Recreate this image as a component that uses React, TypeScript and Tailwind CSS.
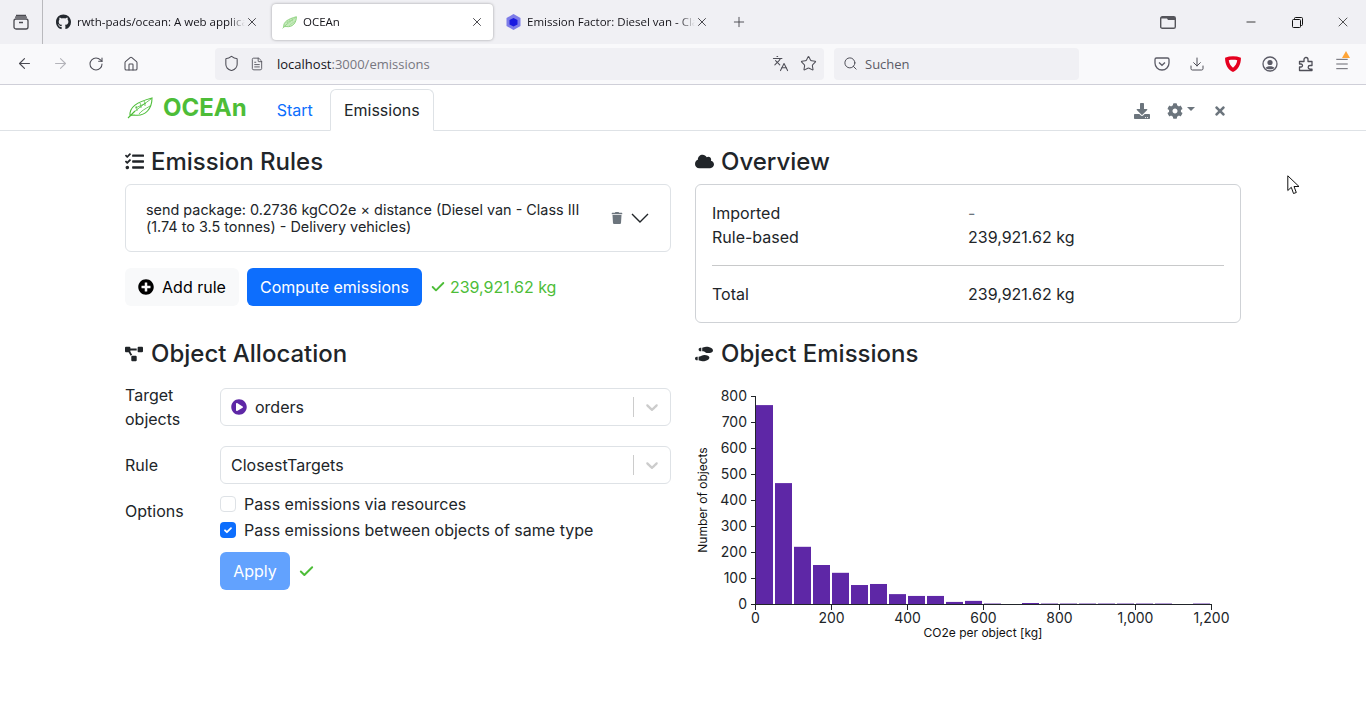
import React from "react";
import { FaCloud, FaCog, FaDownload, FaGithub, FaPlayCircle, FaPlusCircle, FaProjectDiagram, FaShoePrints, FaTasks, FaTimes, FaTrash } from "react-icons/fa";
import { ArrowLeft, ArrowRight, Check, Download, FileText, House, Languages, Menu, Minus, Plus, RotateCw, Search, Shield, Star, X } from "lucide-react";

const ui = "font-['Open_Sans','Noto_Sans',sans-serif]";

function Leaf({ size, width = 26, light = false }: { size: number; width?: number; light?: boolean }) {
  const c = light ? "#8bd07c" : "#4dbd38";
  return (
    <svg width={width} height={size} viewBox="0 0 26 22" fill="none">
      <path d="M1 21 C4 18 6 16 8 14 M3 19 C2 10 10 5 25 1 C25 11 19 20 7 18 C5 18 4 18 3 19Z" stroke={c} strokeWidth={light ? 1.6 : 1.1} fill={light ? "#c6eabd" : "none"} />
      <path d="M7 15 C12 11 17 7 24 2 M9 9 C10 11 10 13 10 14 M13 6 C14 8 14 10 14 11 M17 4 C18 6 18 7 18 9 M12 17 C14 14 18 12 23 9 M8 11 C11 10 15 8 19 6" stroke={c} strokeWidth="0.8" />
    </svg>
  );
}

function Cube() {
  return (
    <svg width="15" height="16" viewBox="0 0 15 16">
      <path d="M7.5 0 L14.5 4 V12 L7.5 16 L.5 12 V4Z" fill="#7d7ce8" />
      <path d="M7.5 4 L11.5 6 V10.5 L7.5 12.5 L3.5 10.5 V6Z" fill="#1a1ae0" />
    </svg>
  );
}

function Tab({ icon, title, active, cls }: { icon: React.ReactNode; title: string; active?: boolean; cls: string }) {
  return (
    <div className={`${cls} h-9 flex items-center rounded-[4px] ${active ? "bg-white shadow-[0_0_3px_rgba(0,0,0,0.35)]" : ""}`}>
      <span className="w-[15px] h-4 flex items-center justify-center shrink-0">{icon}</span>
      <span className="ml-[6px] flex-1 overflow-hidden whitespace-nowrap text-[11.5px] text-[#15141a] [mask-image:linear-gradient(to_left,transparent,black_16px)]">{title}</span>
      <X size={14} strokeWidth={1.3} className="text-[#15141a] shrink-0" />
    </div>
  );
}

function TabStrip() {
  return (
    <div className={`${ui} h-[44px] bg-[#f0f0f4] flex items-center`}>
      <div className="w-[43px] h-[44px] flex items-center justify-center border-r border-[#b9b9bd] shrink-0">
        <svg width="16" height="16" viewBox="0 0 16 16" fill="none" stroke="#4a4a50" strokeWidth="1.3">
          <rect x="1" y="5" width="14" height="10" rx="2" />
          <path d="M3 1.5h10M2 3.2h12M6 8.5h4" />
        </svg>
      </div>
      <div className="flex items-center ml-[8px] gap-[2px]">
        <Tab cls="w-[219px] pl-[5px] pr-[11px]" title="rwth-pads/ocean: A web application" icon={<FaGithub size={16} className="text-[#24292f]" />} />
        <Tab cls="w-[221px] pl-[10px] pr-[9px]" active title="OCEAn" icon={<Leaf size={13} width={15} light />} />
        <Tab cls="w-[221px] pl-[11px] pr-[7px] -mr-[3px]" title="Emission Factor: Diesel van - Class III" icon={<Cube />} />
      </div>
      <Plus size={16} strokeWidth={1.3} className="ml-[18px] text-[#3c3c42]" />
      <div className="flex-1" />
      <svg width="16" height="13" viewBox="0 0 16 13" fill="none" className="mr-[52px]">
        <rect x=".7" y=".7" width="14.6" height="11.6" rx="1.6" stroke="#55555b" strokeWidth="1.4" />
        <path d="M1 1h14v3H8L7 2.6H1Z" fill="#55555b" />
      </svg>
      <div className="w-[46px] flex justify-center"><Minus size={14} strokeWidth={1.3} className="text-black" /></div>
      <div className="w-[46px] flex justify-center">
        <svg width="11" height="11" viewBox="0 0 11 11" fill="none" stroke="#111" strokeWidth="1"><rect x=".5" y="2.5" width="8" height="8" rx="1" /><path d="M2.5 2.5V1.5a1 1 0 0 1 1-1h6a1 1 0 0 1 1 1v6a1 1 0 0 1-1 1H8.5" /></svg>
      </div>
      <div className="w-[46px] flex justify-center"><X size={16} strokeWidth={1} className="text-black" /></div>
    </div>
  );
}

function Toolbar() {
  const c = "text-[#4f4f58]";
  return (
    <div className={`${ui} h-[41px] bg-[#f9f9fb] border-b border-[#cfcfd8] flex items-center pb-px`}>
      <div className="w-[215px] shrink-0 flex items-center pl-[16px]">
        <ArrowLeft size={17} strokeWidth={1.6} className="text-[#4a4a52]" />
        <ArrowRight size={17} strokeWidth={1.5} className="ml-[19px] text-[#b4b4ba]" />
        <RotateCw size={16} strokeWidth={1.6} className={`ml-[19px] ${c}`} />
        <House size={16} strokeWidth={1.6} className={`ml-[19px] ${c}`} />
      </div>
      <div className="w-[609px] h-[32px] bg-[#f0f0f4] rounded-[4px] flex items-center pl-[8px] shrink-0">
        <Shield size={17} strokeWidth={1.5} className={c} />
        <FileText size={14} strokeWidth={1.5} className={`ml-[10px] ${c}`} />
        <span className="ml-[13px] mt-[3px] text-[13px] text-[#15141a]">localhost<span className="text-[#77777f]">:3000/emissions</span></span>
        <div className="flex-1" />
        <Languages size={17} strokeWidth={1.5} className={`${c} mr-[11px]`} />
        <Star size={17} strokeWidth={1.5} className={`${c} mr-[7px]`} />
      </div>
      <div className="w-[245px] h-[32px] bg-[#f0f0f4] rounded-[4px] flex items-center pl-[9px] ml-[10px] shrink-0">
        <Search size={15} strokeWidth={1.6} className={c} />
        <span className="ml-[7px] mt-[3px] text-[13px] text-[#5b5b66]">Suchen</span>
      </div>
      <div className="flex-1 flex items-center justify-end pr-[16px] gap-[20px]">
        <svg width="16" height="16" viewBox="0 0 16 16" fill="none" stroke="#5b5b66" strokeWidth="1.3" className="-mr-[1px]"><path d="M2.5 2h11A1.5 1.5 0 0 1 15 3.5V7A7 7 0 0 1 1 7V3.500A1.500 1.500 0 0 1 2.500 2Z" /><path d="M5 6.500l3 2.800 3-2.800" /></svg>
        <Download size={16} strokeWidth={1.5} className={`${c} -mr-[1px]`} />
        <svg width="18" height="18" viewBox="0 0 17 17" fill="none"><path d="M1 2.500 C6 .8 11 .8 16 2.500 C16 9 13.500 13.500 8.500 16 C3.500 13.500 1 9 1 2.500Z M4.500 5 C7 4.400 10 4.400 12.500 5 C12 8.500 10.500 10.500 8.500 12 C6.500 10.500 5 8.500 4.500 5Z" fill="#e5001f" fillRule="evenodd" /></svg>
        <svg width="16" height="16" viewBox="0 0 16 16" fill="none"><circle cx="8" cy="8" r="7" stroke="#5b5b66" strokeWidth="1.3" /><circle cx="8" cy="6.500" r="2.600" fill="#5b5b66" /><path d="M3.500 12 C5 9.800 11 9.800 12.500 12 C11 13.800 5 13.800 3.500 12Z" fill="#5b5b66" /></svg>
        <svg width="16" height="16" viewBox="0 0 16 16" fill="none" stroke="#4f4f58" strokeWidth="1.3" strokeLinejoin="round"><path d="M1.500 5.500H6V3.500a2 2 0 0 1 4 0v2h4v4h-2a1.800 1.800 0 0 0 0 3.600h2v1.400H1.500v-3.500h1.500a1.500 1.500 0 0 0 0-3H1.500Z" /></svg>
        <div className="relative w-[16px] h-[16px]">
          <Menu size={16} strokeWidth={1.3} className={c} />
          <span className="absolute -top-[5px] left-[8px] w-0 h-0 border-l-[4px] border-r-[4px] border-b-[7px] border-l-transparent border-r-transparent border-b-[#ffa436]" />
        </div>
      </div>
    </div>
  );
}

function Nav() {
  return (
    <div className="h-[46px] border-b border-[#dee2e6] flex justify-center">
      <div className="w-[1116px] flex items-end relative">
        <div className="h-[45px] flex items-center pl-[2px]">
          <Leaf size={22} />
          <span className="ml-[10px] font-bold text-[24px] text-[#4dbd38] leading-[29px]">OCEAn</span>
        </div>
        <span className="ml-[30px] h-[40px] flex items-center text-[16px] text-[#0d6efd]">Start</span>
        <div className="ml-[17px] h-[42px] w-[104px] -mb-px flex items-center justify-center bg-white border border-[#dee2e6] border-b-white rounded-t-[6px] text-[16px] text-[#212529]">Emissions</div>
        <div className="flex-1" />
        <div className="h-[42px] pt-[4px] flex items-center text-[#6c757d] pr-[14px]">
          <FaDownload size={16} />
          <FaCog size={16} className="ml-[17px]" />
          <span className="ml-[4px] -mt-[5px] w-0 h-0 border-l-[4px] border-r-[4px] border-t-[4px] border-l-transparent border-r-transparent border-t-[#6c757d]" />
          <FaTimes size={14} className="ml-[18px]" />
        </div>
      </div>
    </div>
  );
}

function Heading({ icon, title }: { icon: React.ReactNode; title: string }) {
  return (
    <h4 className="flex items-center h-[29px] text-[24px] leading-[29px] font-medium text-[#212529]">
      <span className="w-[26px] flex items-center">{icon}</span>
      {title}
    </h4>
  );
}

function Select({ children }: { children: React.ReactNode }) {
  return (
    <div className="flex-1 h-[38px] border border-[#dee2e6] rounded-[6px] flex items-center pl-[10px] pr-[8px] text-[#212529]">
      <div className="flex-1 flex items-center gap-[8px]">{children}</div>
      <span className="w-px h-[20px] bg-[#cccccc]" />
      <svg width="20" height="20" viewBox="0 0 20 20" className="ml-[8px] fill-[#cccccc]">
        <path d="M4.516 7.548c.436-.446 1.043-.481 1.576 0L10 11.295l3.908-3.747c.533-.481 1.141-.446 1.574 0 .436.445.408 1.197 0 1.615-.406.418-4.695 4.502-4.695 4.502a1.095 1.095 0 0 1-1.576 0S4.924 9.581 4.516 9.163c-.409-.418-.436-1.170 0-1.615z" />
      </svg>
    </div>
  );
}

const bars = [765, 465, 220, 150, 120, 73, 77, 38, 31, 31, 8, 12, 1, 0, 2, 1, 1, 1, 1, 1, 1, 1, 0, 1];

function Chart() {
  const x0 = 61, y0 = 214;
  const tick = "fill-[#212529]";
  return (
    <svg width="546" height="270" viewBox="0 0 546 270" className="block mt-[22px]">
      {bars.map((b, i) =>
        b > 0 ? <rect key={i} x={x0 + i * 19} y={y0 - Math.max(b * 0.26, 1)} width="17" height={Math.max(b * 0.26, 1)} fill="#5e27a6" opacity={b === 1 ? 0.45 : 1} /> : null
      )}
      <path d={`M${x0 - 0.5} 6V${y0 + 0.5}H${x0 + 456}`} fill="none" stroke="#212529" />
      {[0, 100, 200, 300, 400, 500, 600, 700, 800].map((v) => {
        const y = y0 - v * 0.26;
        return (
          <g key={v}>
            <path d={`M${x0 - 5} ${y + 0.5}H${x0}`} stroke="#212529" />
            <text x={x0 - 9} y={y + 5} textAnchor="end" fontSize="14" className={tick}>{v}</text>
          </g>
        );
      })}
      {[0, 200, 400, 600, 800, 1000, 1200].map((v) => {
        const x = x0 + v * 0.38;
        return (
          <g key={v}>
            <path d={`M${x - 0.5} ${y0}V${y0 + 6}`} stroke="#212529" />
            <text x={x - 0.5} y={y0 + 19} textAnchor="middle" fontSize="14" className={tick}>{v.toLocaleString("en-US")}</text>
          </g>
        );
      })}
      <text x="288" y={y0 + 33} textAnchor="middle" fontSize="12" className="fill-[#111]">CO2e per object [kg]</text>
      <text transform="translate(12 110) rotate(-90)" textAnchor="middle" fontSize="12" className="fill-[#111]">Number of objects</text>
    </svg>
  );
}

function Checkbox({ on, label }: { on?: boolean; label: string }) {
  return (
    <div className="h-[24px] flex items-center gap-[8px]">
      <span className={`w-4 h-4 rounded-[4px] flex items-center justify-center ${on ? "bg-[#0d6efd]" : "border border-[#dee2e6] bg-white"}`}>
        {on && (
          <svg width="12" height="12" viewBox="0 0 20 20" fill="none"><path d="m5 10.500 3.200 3.200L15 7" stroke="#fff" strokeWidth="3" strokeLinecap="round" strokeLinejoin="round" /></svg>
        )}
      </span>
      {label}
    </div>
  );
}

function Main() {
  return (
    <div className="w-[1116px] mx-auto grid grid-cols-2 gap-x-[24px] gap-y-[16px] pt-[16px] text-[16px] text-[#212529]">
      <section>
        <Heading title="Emission Rules" icon={<FaTasks size={19} />} />
        <div className="mt-[8px] h-[68px] border border-[#dee2e6] rounded-[6px] flex items-center pl-[20px] pr-[21px]">
          <p className="w-[450px] text-[14.4px] leading-[17px]">send package: 0.2736 kgCO2e × distance (Diesel van - Class III (1.74 to 3.5 tonnes) - Delivery vehicles)</p>
          <div className="flex-1" />
          <FaTrash size={12} className="text-[#6c757d]" />
          <svg width="18" height="10" viewBox="0 0 18 10" fill="none" className="ml-[8px]"><path d="M1 1l8 8 8-8" stroke="#212529" strokeWidth="1.4" /></svg>
        </div>
        <div className="mt-[16px] flex items-center">
          <div className="h-[38px] w-[114px] bg-[#f8f9fa] rounded-[6px] flex items-center justify-center gap-[8px] text-black">
            <FaPlusCircle size={16} />
            Add rule
          </div>
          <div className="ml-[8px] h-[38px] px-[13px] bg-[#0d6efd] rounded-[6px] flex items-center text-white">Compute emissions</div>
          <div className="ml-[8px] flex items-center gap-[4px] text-[#4dbd38]"><Check size={16} strokeWidth={2.8} />239,921.62 kg</div>
        </div>
      </section>
      <section>
        <Heading title="Overview" icon={<FaCloud size={19} />} />
        <div className="mt-[8px] h-[139px] border border-[#cfd2d6] rounded-[6px] px-[16px] pt-[16px]">
          <div className="grid grid-cols-[256px_1fr] leading-[24px]">
            <span>Imported</span><span className="text-[#6c757d]">-</span>
            <span>Rule-based</span><span>239,921.62 kg</span>
          </div>
          <div className="mt-[16px] h-px bg-[#c8c9ca]" />
          <div className="mt-[16px] grid grid-cols-[256px_1fr] leading-[24px]">
            <span>Total</span><span>239,921.62 kg</span>
          </div>
        </div>
      </section>
      <section>
        <Heading title="Object Allocation" icon={<FaProjectDiagram size={18} />} />
        <div className="mt-[15px] flex items-center">
          <span className="w-[95px] leading-[24px]">Target objects</span>
          <Select><FaPlayCircle size={16} className="text-[#5e27a6]" />orders</Select>
        </div>
        <div className="mt-[15px] flex items-center">
          <span className="w-[95px]">Rule</span>
          <Select>ClosestTargets</Select>
        </div>
        <div className="mt-[8px] flex items-start">
          <span className="w-[95px] mt-[7px]">Options</span>
          <div className="flex flex-col gap-[2px]">
            <Checkbox label="Pass emissions via resources" />
            <Checkbox on label="Pass emissions between objects of same type" />
          </div>
        </div>
        <div className="mt-[10px] ml-[95px] flex items-center gap-[8px]">
          <div className="h-[38px] w-[70px] rounded-[6px] bg-[#62a2fe] text-white flex items-center justify-center">Apply</div>
          <Check size={17} strokeWidth={2.8} className="text-[#4dbd38]" />
        </div>
      </section>
      <section>
        <Heading title="Object Emissions" icon={<FaShoePrints size={18} />} />
        <Chart />
      </section>
    </div>
  );
}

export default function App() {
  return (
    <div className="relative w-[1366px] h-[728px] overflow-hidden bg-white font-['Inter',sans-serif]">
      <TabStrip />
      <Toolbar />
      <Nav />
      <Main />
      <svg width="14" height="20" viewBox="0 0 14 20" className="absolute left-[1287px] top-[175px]">
        <path d="M.8.8V15.500L4.300 12.300 6.500 18.500 9.300 17.500 7 11.500H12Z" fill="#fff" stroke="#111" strokeWidth="1" />
      </svg>
    </div>
  );
}
